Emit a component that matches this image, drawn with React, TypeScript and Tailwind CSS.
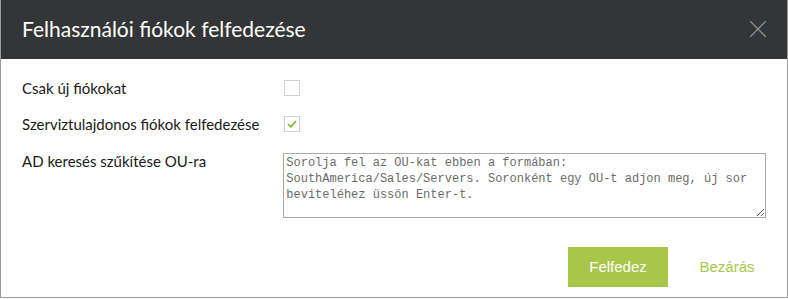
import { X } from "lucide-react";

export default function App() {
  return (
    <div className="flex h-[299px] w-[788px] flex-col bg-white">
      <div className="flex h-[298px] flex-col border-x border-b border-[#9a9a9a]">
        <header className="flex h-[59px] shrink-0 items-center justify-between bg-[#343536] pl-[21px] pr-[14px]">
          <h1 className="pb-[1px] font-['Lato',sans-serif] text-[21px] text-white">Felhasználói fiókok felfedezése</h1>
          <X size={30} strokeWidth={1} className="mt-[-1px] text-[#8e8e8e]" />
        </header>

        <div className="flex flex-col px-[21px] pt-[21px] font-['Lato',sans-serif] text-[15px] text-[#1a1a1a]">
          <div className="flex h-[16px] items-center">
            <span className="w-[262px]">Csak új fiókokat</span>
            <span className="h-[16px] w-[16px] border border-[#cfcfcf] bg-white" />
          </div>
          <div className="mt-[20px] flex h-[16px] items-center">
            <span className="w-[262px]">Szerviztulajdonos fiókok felfedezése</span>
            <span className="flex h-[16px] w-[16px] items-center justify-center border border-[#cfcfcf] bg-white">
              <svg width="10" height="8" viewBox="0 0 10 8">
                <path d="M1 4.2 L3.8 6.8 L9 1.2" fill="none" stroke="#8cb63c" strokeWidth="1.8" />
              </svg>
            </span>
          </div>
          <div className="mt-[21px] flex items-start">
            <span className="w-[262px] leading-[16px]">AD keresés szűkítése OU-ra</span>
            <textarea
              className="h-[65px] w-[484px] border border-[#a9a9a9] px-[2px] py-[1px] font-['Liberation_Mono',monospace] text-[12px] leading-[16px] outline-none placeholder:text-[#6b6b6b]"
              placeholder="Sorolja fel az OU-kat ebben a formában: SouthAmerica/Sales/Servers. Soronként egy OU-t adjon meg, új sor beviteléhez üssön Enter-t."
            />
          </div>
        </div>

        <div className="mt-auto flex justify-end gap-[9px] pb-[10px] pr-[10px] font-['Liberation_Sans',sans-serif] text-[15px]">
          <button className="h-[40px] w-[100px] bg-[#a8c64a] text-white">Felfedez</button>
          <button className="h-[40px] w-[100px] text-[#a8c64a]">Bezárás</button>
        </div>
      </div>
    </div>
  );
}
